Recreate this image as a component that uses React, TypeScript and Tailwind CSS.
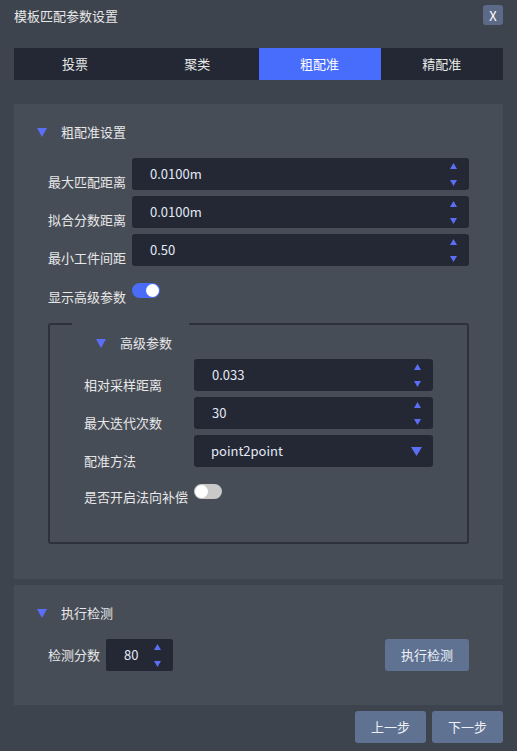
import { useState } from "react";

const font = { fontFamily: '"Noto Sans CJK SC", "Noto Sans", sans-serif' };

const Tri = ({ down, className }: { down?: boolean; className?: string }) => (
  <svg width="7" height="6" viewBox="0 0 7 6" className={className}>
    {down ? <polygon points="0,0 7,0 3.5,6" fill="#5b6ef5" /> : <polygon points="3.5,0 7,6 0,6" fill="#5b6ef5" />}
  </svg>
);

const Spinner = () => (
  <div className="flex flex-col justify-between h-full pt-[5px] pb-[4px] pr-[12px]">
    <Tri />
    <Tri down />
  </div>
);

const NumInput = ({ value, className }: { value: string; className: string }) => (
  <div className={`flex items-stretch justify-between h-8 bg-[#232834] rounded-[3px] ${className}`}>
    <span className="pl-[18px] self-center text-[13px] text-[#e4e9f5]">{value}</span>
    <Spinner />
  </div>
);

const Toggle = ({ on }: { on: boolean }) => (
  <div
    className={`w-[28px] h-[15px] rounded-full flex items-center px-[1px] ${
      on ? "bg-[#4a6cf7] justify-end" : "bg-[#c9c9c9] justify-start"
    }`}
  >
    <div className="w-[13px] h-[13px] rounded-full bg-white" />
  </div>
);

const SectionTitle = ({ text }: { text: string }) => (
  <div className="flex items-center h-6">
    <svg width="10" height="9" viewBox="0 0 10 9" className="mr-[14px]">
      <polygon points="0,0 10,0 5,9" fill="#5b6ef5" />
    </svg>
    <span className="text-[13px] text-[#e8e8e8]">{text}</span>
  </div>
);

const tabs = ["投票", "聚类", "粗配准", "精配准"];

export default function App() {
  const [active] = useState(2);

  return (
    <div className="w-[517px] h-[751px] bg-[#3e444e] text-[#e8e8e8] overflow-hidden" style={font}>
      <div className="h-[30px] flex items-center justify-between pl-[14px] pr-[14px] pt-[2px]">
        <span className="text-[13px]">模板匹配参数设置</span>
        <button className="w-5 h-5 mt-[-2px] rounded-[3px] bg-[#5d6a87] text-[13px] leading-none text-white flex items-center justify-center">
          X
        </button>
      </div>

      <div className="mx-[14px] mt-[18px] h-8 grid grid-cols-4 bg-[#232834]">
        {tabs.map((t, i) => (
          <div
            key={t}
            className={`flex items-center justify-center text-[13px] ${i === active ? "bg-[#486dfc] text-white" : ""}`}
          >
            {t}
          </div>
        ))}
      </div>

      <div className="mx-[14px] mt-6 h-[475px] bg-[#474d57] pl-[23px] pt-4 pr-[34px]">
        <SectionTitle text="粗配准设置" />
        <div className="mt-[14px] pl-[11px] flex flex-col gap-[6px]">
          {[
            ["最大匹配距离", "0.0100m"],
            ["拟合分数距离", "0.0100m"],
            ["最小工件间距", "0.50"],
          ].map(([l, v]) => (
            <div key={l} className="flex items-end h-8">
              <span className="w-[84px] text-[13px] leading-[18px] mb-[-1px]">{l}</span>
              <NumInput value={v} className="flex-1" />
            </div>
          ))}
          <div className="flex items-start mt-[11px]">
            <span className="w-[84px] text-[13px] leading-[18px] mt-[5px]">显示高级参数</span>
            <Toggle on />
          </div>
        </div>

        <fieldset className="mt-[17px] ml-[11px] h-[221px] border-2 border-[#2c313b] rounded-[3px] pl-[22px] pr-[34px] pt-[6px]">
          <legend className="w-[117px] h-0 p-0" />
          <div className="pl-[24px]">
            <SectionTitle text="高级参数" />
          </div>
          <div className="mt-[4px] pl-[12px] flex flex-col gap-[6px]">
            {[
              ["相对采样距离", "0.033"],
              ["最大迭代次数", "30"],
            ].map(([l, v]) => (
              <div key={l} className="flex items-end h-8">
                <span className="w-[110px] text-[13px] leading-[18px] mb-[-3px]">{l}</span>
                <NumInput value={v} className="flex-1" />
              </div>
            ))}
            <div className="flex items-end h-8">
              <span className="w-[110px] text-[13px] leading-[18px] mb-[-3px]">配准方法</span>
              <div className="flex-1 h-8 bg-[#232834] rounded-[3px] flex items-center justify-between pl-[17px] pr-[11px]">
                <span className="text-[13px] text-[#e4e9f5]">point2point</span>
                <svg width="11" height="9" viewBox="0 0 11 9">
                  <polygon points="0,0 11,0 5.5,9" fill="#5b6ef5" />
                </svg>
              </div>
            </div>
            <div className="flex items-start mt-[11px]">
              <span className="w-[110px] text-[13px] leading-[18px] mt-[4px]">是否开启法向补偿</span>
              <Toggle on={false} />
            </div>
          </div>
        </fieldset>
      </div>

      <div className="mx-[14px] mt-[6px] h-[120px] bg-[#474d57] pl-[23px] pt-4 pr-[34px]">
        <SectionTitle text="执行检测" />
        <div className="mt-[14px] pl-[11px] flex items-center justify-between">
          <div className="flex items-center">
            <span className="w-[58px] text-[13px]">检测分数</span>
            <div className="w-[67px] h-8 bg-[#232834] rounded-[2px] flex items-stretch justify-between">
              <span className="pl-[18px] self-center text-[13px] text-[#e4e9f5]">80</span>
              <Spinner />
            </div>
          </div>
          <button className="w-[84px] h-8 rounded-[3px] bg-[#5f7292] text-[13px] text-[#eef1f7]">执行检测</button>
        </div>
      </div>

      <div className="mt-[6px] mr-[14px] flex justify-end gap-[6px]">
        <button className="w-[71px] h-8 rounded-[3px] bg-[#5f7292] text-[13px] text-[#eef1f7]">上一步</button>
        <button className="w-[71px] h-8 rounded-[3px] bg-[#5f7292] text-[13px] text-[#eef1f7]">下一步</button>
      </div>
    </div>
  );
}
